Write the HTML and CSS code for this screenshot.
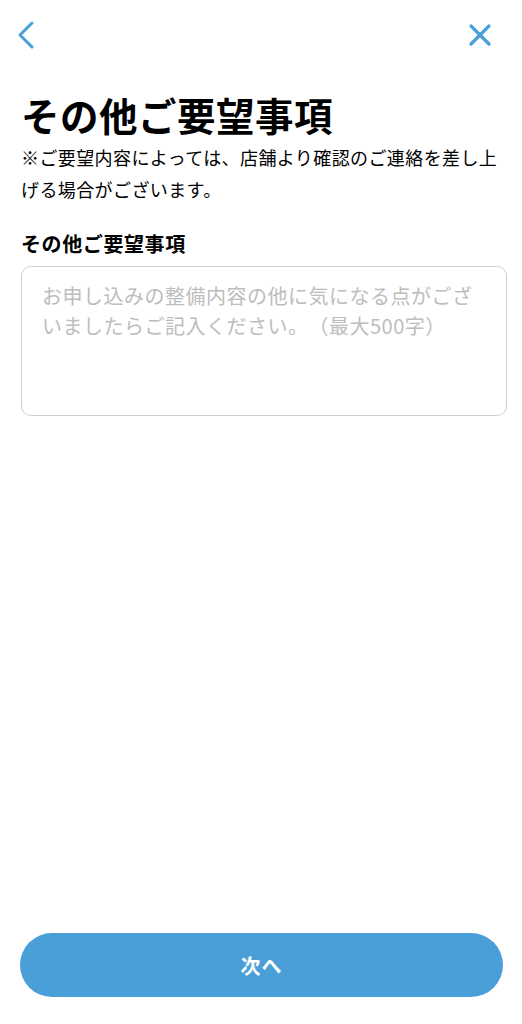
FILE: index.html
```html
<!DOCTYPE html>
<html lang="ja">
<head>
<meta charset="utf-8">
<link rel="stylesheet" href="styles.css">
</head>
<body>
<div class="page">
  <header class="topbar">
    <button class="icon-btn" aria-label="戻る">
      <svg width="20" height="30" viewBox="0 0 20 30"><path d="M15 3 L3 15 L15 27" fill="none" stroke="#4a9fd8" stroke-width="3" stroke-linecap="round" stroke-linejoin="round"/></svg>
    </button>
    <button class="icon-btn" aria-label="閉じる">
      <svg width="24" height="24" viewBox="0 0 24 24"><path d="M3 3 L21 21 M21 3 L3 21" fill="none" stroke="#4a9fd8" stroke-width="3.2" stroke-linecap="round"/></svg>
    </button>
  </header>
  <main class="content">
    <h1 class="title">その他ご要望事項</h1>
    <p class="desc">※ご要望内容によっては、店舗より確認のご連絡を差し上げる場合がございます。</p>
    <label class="field-label" for="req">その他ご要望事項</label>
    <textarea id="req" class="field" placeholder="お申し込みの整備内容の他に気になる点がございましたらご記入ください。（最大500字）"></textarea>
  </main>
  <footer class="footer">
    <button class="next-btn">次へ</button>
  </footer>
</div>
</body>
</html>
```
FILE: styles.css
```css
* { box-sizing: border-box; }
html, body { margin: 0; padding: 0; background: #fff; }
body {
  font-family: "Noto Sans CJK JP", "Noto Sans", sans-serif;
  color: #000;
  text-spacing-trim: space-all;
}
.page {
  min-height: 100vh;
  display: flex;
  flex-direction: column;
}
.topbar {
  display: flex;
  justify-content: space-between;
  align-items: center;
  padding: 0 30px 0 17px;
  height: 70px;
}
.icon-btn {
  background: none;
  border: 0;
  padding: 0;
  display: flex;
  align-items: center;
}
.content {
  padding: 0 16px 0 21px;
  display: flex;
  flex-direction: column;
}
.title {
  margin: 17px 0 0;
  font-size: 38.5px;
  line-height: 54px;
  font-weight: 700;
  letter-spacing: 0.5px;
}
.desc {
  margin: 0;
  font-size: 18px;
  line-height: 32px;
  letter-spacing: 0.4px;
}
.field-label {
  margin-top: 25px;
  font-size: 20px;
  line-height: 28px;
  font-weight: 700;
  letter-spacing: 0.6px;
}
.field {
  margin-top: 8px;
  width: 486px;
  height: 150px;
  border: 1.5px solid #cfcfcf;
  border-radius: 10px;
  padding: 14px 20px;
  font-family: inherit;
  font-size: 20px;
  line-height: 30px;
  letter-spacing: 0.5px;
  resize: none;
  outline: none;
  text-spacing-trim: space-all;
}
.field::placeholder { color: #bdbdbd; }
.footer {
  margin-top: auto;
  padding: 0 19px 27px 20px;
}
.next-btn {
  width: 100%;
  height: 64px;
  border: 0;
  border-radius: 32px;
  background: #4a9fd8;
  color: #fff;
  font-family: inherit;
  font-size: 20px;
  font-weight: 700;
  letter-spacing: 1px;
}
```
